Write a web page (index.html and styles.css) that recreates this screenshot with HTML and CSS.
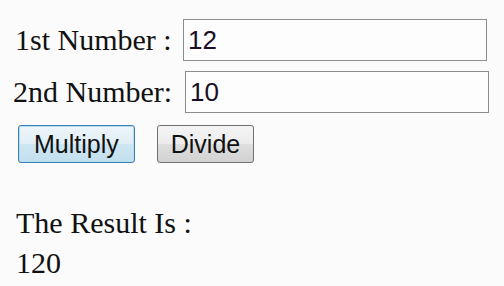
FILE: index.html
```html
<!DOCTYPE html>
<html lang="en">
<head>
  <meta charset="UTF-8" />
  <title>Calculator</title>
  <link rel="stylesheet" href="styles.css">
</head>
<body>
  <div class="calc">
    <div class="row">
      <label for="num1">1st Number :</label>
      <input type="text" id="num1" value="12" />
    </div>
    <div class="row">
      <label for="num2" class="second">2nd Number:</label>
      <input type="text" id="num2" value="10" />
    </div>
    <div class="buttons">
      <button class="btn active" id="multiply">Multiply</button>
      <button class="btn" id="divide">Divide</button>
    </div>
    <div class="result">
      <div>The Result Is :</div>
      <div id="result">120</div>
    </div>
  </div>
</body>
</html>
```

FILE: styles.css
```css
body {
  margin: 0;
  background: #fbfbfb;
  font-family: "Liberation Serif", "Times New Roman", serif;
  color: #111;
}
.calc {
  padding: 19px 0 0 13px;
}
.row {
  display: flex;
  align-items: center;
  margin-bottom: 10px;
}
label {
  font-size: 30px;
  width: 168px;
  padding-left: 2px;
}
label.second {
  padding-left: 0;
  width: 172px;
}
input {
  width: 304px;
  height: 42px;
  box-sizing: border-box;
  border: 1px solid #8c8c8c;
  background: #fdfdfd;
  padding: 0 4px;
  font-family: "Liberation Sans", Arial, sans-serif;
  font-size: 26px;
  color: #1a0f26;
}
.buttons {
  display: flex;
  gap: 22px;
  margin-top: 12px;
  padding-left: 5px;
}
.btn {
  height: 38px;
  padding: 0 13px;
  font-family: "Liberation Sans", Arial, sans-serif;
  font-size: 25px;
  color: #111;
  border: 1px solid #707070;
  border-radius: 3px;
  background: linear-gradient(#f4f4f4 0%, #ececec 50%, #dedede 51%, #d2d2d2 100%);
}
.btn.active {
  padding: 0 15px;
  border-color: #3c7fb1;
  box-shadow: inset 0 0 0 1px #b6dcef;
  background: linear-gradient(#eef6fa 0%, #e0eef6 50%, #cfe6f2 51%, #c2dfee 100%);
}
.result {
  margin-top: 40px;
  font-size: 30px;
  line-height: 40px;
  padding-left: 3px;
}
```
